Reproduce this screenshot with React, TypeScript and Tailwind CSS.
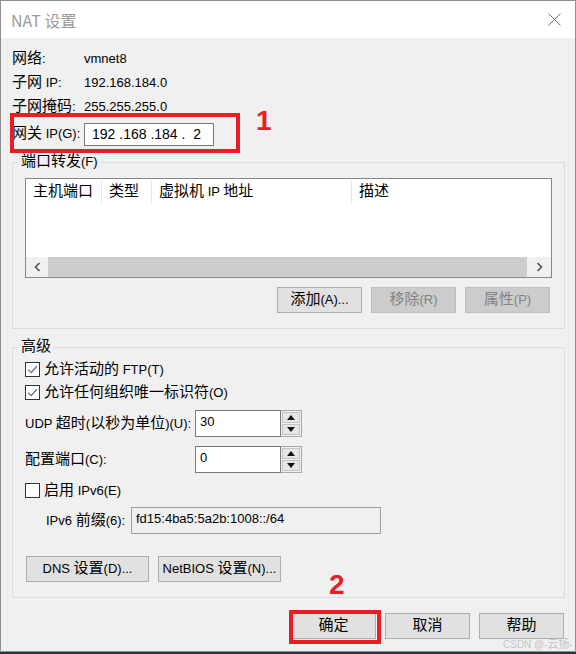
import React from "react";

// CJK runs at 15px Noto, everything else falls back to the 13px Liberation Sans of the root
function T({ s }: { s: string }) {
  const parts = s.split(/([\u2E80-\u9FFF\uFF00-\uFFEF]+)/);
  return (
    <>
      {parts.map((p, i) =>
        p === "" ? null : i % 2 === 1 ? (
          <span key={i} className="font-['Noto_Sans_CJK_SC',sans-serif] text-[15px] leading-[14px]">
            {p}
          </span>
        ) : (
          <span key={i}>{p}</span>
        )
      )}
    </>
  );
}

function Btn({ label, disabled = false, w = "w-[85px]" }: { label: string; disabled?: boolean; w?: string }) {
  return (
    <div
      className={
        "flex h-[26px] items-center justify-center whitespace-nowrap border leading-[20px] " +
        w +
        (disabled ? " border-[#bfbfbf] bg-[#cccccc] text-[#838383]" : " border-[#adadad] bg-[#e1e1e1] text-black")
      }
    >
      <span>
        <T s={label} />
      </span>
    </div>
  );
}

function CheckBox({ checked, label }: { checked: boolean; label: string }) {
  return (
    <div className="flex h-[23px] items-center">
      <div className="flex h-[15px] w-[15px] items-center justify-center border border-[#333333] bg-white">
        {checked && (
          <svg width="11" height="11" viewBox="0 0 11 11">
            <path d="M1.3 5.6 L4.2 8.6 L9.8 2.2" fill="none" stroke="#6b6b6b" strokeWidth="1.3" />
          </svg>
        )}
      </div>
      <span className="ml-[4px] whitespace-nowrap leading-[20px]">
        <T s={label} />
      </span>
    </div>
  );
}

function Spin({ value }: { value: string }) {
  return (
    <div className="flex h-[27px] w-[107px]">
      <div className="flex-1 border border-[#7a7a7a] bg-white pl-[4px] pt-[1px] leading-[20px]">{value}</div>
      <div className="flex w-[21px] flex-col gap-[1px] border-y border-r border-[#a8a8a8] bg-[#f0f0f0] p-[1px]">
        <div className="flex flex-1 items-center justify-center border border-[#c4c4c4] bg-[#e6e6e6]">
          <svg width="8" height="5" viewBox="0 0 8 5">
            <path d="M0 5 L4 0 L8 5 Z" fill="#111" />
          </svg>
        </div>
        <div className="flex flex-1 items-center justify-center border border-[#c4c4c4] bg-[#e6e6e6]">
          <svg width="8" height="5" viewBox="0 0 8 5">
            <path d="M0 0 L8 0 L4 5 Z" fill="#111" />
          </svg>
        </div>
      </div>
    </div>
  );
}

function HeaderCell({ label, w }: { label: string; w: string }) {
  return (
    <div className={"flex h-full items-center " + w}>
      <span className="flex-1 whitespace-nowrap pl-[7px] leading-[20px]">
        <T s={label} />
      </span>
      <div className="h-[22px] w-[1px] bg-[#e5e5e5]" />
    </div>
  );
}

function InfoRow({ label, value }: { label: string; value: string }) {
  return (
    <div className="flex h-[24px] items-center whitespace-nowrap leading-[20px]">
      <span className="w-[72px]">
        <T s={label} />
      </span>
      <span>{value}</span>
    </div>
  );
}

export default function App() {
  return (
    <div className="relative h-[654px] w-[576px] bg-[#22364a] font-['Liberation_Sans','Noto_Sans_CJK_SC',sans-serif] text-[13px] text-black">
      <div className="flex h-[652px] w-[576px] flex-col border border-[#8e8e8e] bg-[#f0f0f0]">
        {/* title bar */}
        <div className="flex h-[37px] shrink-0 items-center justify-between bg-white pl-[10px] pr-[14px]">
          <span className="font-['Noto_Sans_CJK_SC',sans-serif] text-[16px] leading-[20px] text-[#9a9a9a]">NAT 设置</span>
          <svg width="13" height="13" viewBox="0 0 13 13">
            <path d="M0.5 0.5 L12.5 12.5 M12.5 0.5 L0.5 12.5" stroke="#6f6f6f" strokeWidth="1" />
          </svg>
        </div>

        <div className="flex flex-1 flex-col pl-[11px] pr-[10px] pt-[9px]">
          {/* info */}
          <InfoRow label="网络:" value="vmnet8" />
          <InfoRow label="子网 IP:" value="192.168.184.0" />
          <InfoRow label="子网掩码:" value="255.255.255.0" />
          <div className="flex h-[30px] items-center whitespace-nowrap leading-[20px]">
            <span className="w-[72px]">
              <T s="网关 IP(G):" />
            </span>
            <div className="flex h-[23px] w-[130px] items-center whitespace-pre border border-[#7a7a7a] bg-white pl-[7px] text-[14px]">
              192 .168 .184 .  2
            </div>
          </div>

          {/* port forwarding */}
          <fieldset className="mt-[3px] border border-[#dcdcdc]">
            <legend className="ml-[5px] px-[3px] leading-[20px]">
              <T s="端口转发(F)" />
            </legend>
            <div className="flex flex-col px-[12px] pb-[15px] pt-[6px]">
              <div className="flex h-[100px] flex-col border border-[#828790] bg-white">
                <div className="flex h-[25px] items-center">
                  <HeaderCell label="主机端口" w="w-[76px]" />
                  <HeaderCell label="类型" w="w-[50px]" />
                  <HeaderCell label="虚拟机 IP 地址" w="w-[200px]" />
                  <span className="pl-[7px] leading-[20px]">
                    <T s="描述" />
                  </span>
                </div>
                <div className="flex-1" />
                <div className="flex h-[20px]">
                  <div className="flex w-[22px] items-center justify-center bg-[#f0f0f0]">
                    <svg width="7" height="10" viewBox="0 0 7 10">
                      <path d="M5.5 1 L1.5 5 L5.5 9" fill="none" stroke="#505050" strokeWidth="1.6" />
                    </svg>
                  </div>
                  <div className="flex-1 bg-[#cdcdcd]" />
                  <div className="flex w-[24px] items-center justify-center bg-[#f0f0f0]">
                    <svg width="7" height="10" viewBox="0 0 7 10">
                      <path d="M1.5 1 L5.5 5 L1.5 9" fill="none" stroke="#505050" strokeWidth="1.6" />
                    </svg>
                  </div>
                </div>
              </div>
              <div className="mr-[2px] mt-[9px] flex justify-end gap-[9px]">
                <Btn label="添加(A)..." />
                <Btn label="移除(R)" disabled />
                <Btn label="属性(P)" disabled />
              </div>
            </div>
          </fieldset>

          {/* advanced */}
          <fieldset className="mt-[8px] border border-[#dcdcdc]">
            <legend className="ml-[5px] px-[3px] leading-[20px]">
              <T s="高级" />
            </legend>
            <div className="flex flex-col px-[12px] pb-[15px] pt-[1px]">
              <CheckBox checked label="允许活动的 FTP(T)" />
              <CheckBox checked label="允许任何组织唯一标识符(O)" />
              <div className="mt-[6px] flex h-[27px] items-center whitespace-nowrap">
                <span className="w-[170px] leading-[20px]">
                  <T s="UDP 超时(以秒为单位)(U):" />
                </span>
                <Spin value="30" />
              </div>
              <div className="mt-[9px] flex h-[27px] items-center whitespace-nowrap">
                <span className="w-[170px] leading-[20px]">
                  <T s="配置端口(C):" />
                </span>
                <Spin value="0" />
              </div>
              <div className="mt-[6px]">
                <CheckBox checked={false} label="启用 IPv6(E)" />
              </div>
              <div className="mt-[5px] flex h-[27px] items-center whitespace-nowrap pl-[21px]">
                <span className="w-[85px] leading-[20px]">
                  <T s="IPv6 前缀(6):" />
                </span>
                <div className="h-[27px] w-[250px] border border-[#a0a0a0] bg-[#f0f0f0] pl-[4px] pt-[1px] leading-[20px]">
                  fd15:4ba5:5a2b:1008::/64
                </div>
              </div>
              <div className="ml-[1px] mt-[22px] flex gap-[9px]">
                <Btn label="DNS 设置(D)..." w="w-[123px]" />
                <Btn label="NetBIOS 设置(N)..." w="w-[123px]" />
              </div>
            </div>
          </fieldset>

          {/* dialog buttons */}
          <div className="mr-[1px] mt-[15px] flex justify-end gap-[9px]">
            <Btn label="确定" />
            <Btn label="取消" />
            <Btn label="帮助" />
          </div>
        </div>
      </div>

      {/* annotations */}
      <div className="absolute left-[10px] top-[113px] h-[40px] w-[230px] border-[4px] border-[#ed1c24]" />
      <div className="absolute left-[256px] top-[104px] text-[28px] font-bold leading-[34px] text-[#ed1c24]">1</div>
      <div className="absolute left-[289px] top-[610px] h-[34px] w-[92px] border-[4px] border-[#ed1c24]" />
      <div className="absolute left-[329px] top-[568px] text-[28px] font-bold leading-[34px] text-[#ed1c24]">2</div>
      <div className="absolute left-[503px] top-[638px] whitespace-nowrap text-[10px] leading-[12px] text-[#c4c4c4]">
        CSDN @-<span className="font-['Noto_Sans_CJK_SC',sans-serif] text-[11px] leading-[10px]">云扬</span>-
      </div>
    </div>
  );
}
